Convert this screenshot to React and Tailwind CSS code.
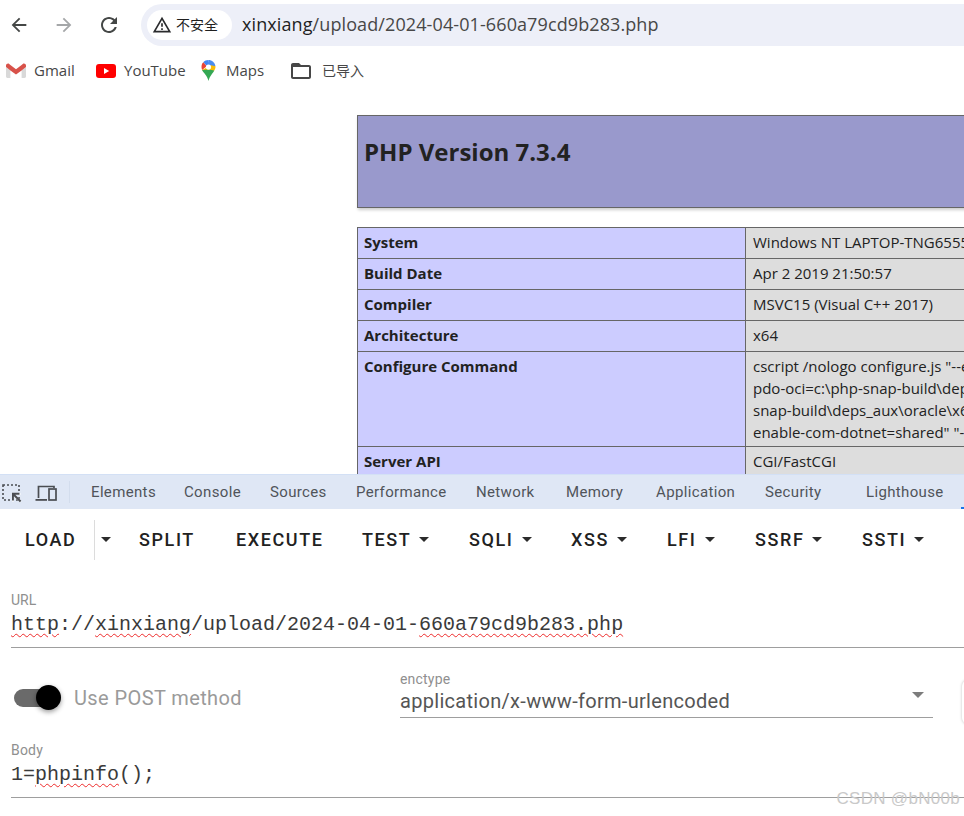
import React from "react";

const roboto = "font-['Roboto',sans-serif]";
const phpFont = "font-['Open_Sans','Noto_Sans',sans-serif]";

const Material = ({ d, className }) => (
  <svg viewBox="0 0 24 24" fill="currentColor" className={className}>
    <path d={d} />
  </svg>
);

const Gmail = () => (
  <svg viewBox="0 0 20 16" className="w-[20px] h-[16px]">
    <path d="M1.3 15H4.5V7.2L0 3.8V13.7C0 14.4.6 15 1.3 15Z" fill="#4285f4" opacity="0" />
    <path d="M1.4 15H4.4V7.4L0 4V13.6C0 14.4.6 15 1.4 15Z" fill="#d9d9d9" />
    <path d="M15.6 15H18.6C19.4 15 20 14.4 20 13.6V4L15.6 7.4Z" fill="#d9d9d9" />
    <path d="M0 2.6V4L4.4 7.4 10 11.6 15.6 7.4 20 4V2.6C20 .9 18 0 16.8 1L15.6 2 10 6.2 4.4 2 3.2 1C2 0 0 .9 0 2.6Z" fill="#d8524a" />
  </svg>
);

const YouTube = () => (
  <svg viewBox="0 0 20 14" className="w-[20px] h-[14px]">
    <rect width="20" height="14" rx="3" fill="#ff0000" />
    <path d="M8 4l5.2 3L8 10z" fill="#fff" />
  </svg>
);

const Maps = () => (
  <svg viewBox="0 0 16 24" className="w-[15px] h-[21px]">
    <path d="M8 0C5.6 0 3.4 1 2 2.7L7 8Z" fill="#4285f4" />
    <path d="M8 0C11.9 0 15.5 3 15.9 7.2L11 8.5 7 5Z" fill="#4a8df0" />
    <path d="M2 2.7C.7 4 0 6 0 8c0 1.3.3 2.4.7 3.4L6 7Z" fill="#ea4335" />
    <path d="M15.9 7C16.1 8.900 15.500 10.500 14.600 12L5 15 .7 11.400 11 6Z" fill="#fbbc04" />
    <path d="M.7 11.400C2.300 15 6.400 17.500 8 24c1.500-6 4.800-8.400 6.600-12L8.400 10.800Z" fill="#34a853" />
    <circle cx="8" cy="8" r="3" fill="#fff" />
  </svg>
);

const InspectIcon = () => (
  <svg viewBox="0 0 20 20" fill="none" className="w-[20px] h-[20px] text-[#4a4d52]">
    <rect x="1" y="2" width="16" height="15" stroke="currentColor" strokeWidth="1.6" strokeDasharray="2 2" />
    <path d="M10 10h8.500v2h-5l6 6-1.500 1.500-6-6v5h-2z" fill="#fff" />
    <path d="M10 9.800h7.500v2h-4.200l6 6-1.400 1.400-6-6v4.200h-1.900z" fill="currentColor" />
  </svg>
);

const DeviceIcon = () => (
  <svg viewBox="0 0 22 18" fill="none" className="w-[22px] h-[18px] text-[#4a4d52]">
    <path d="M3.500 14V2.500H19V4" stroke="currentColor" strokeWidth="1.700" />
    <path d="M.5 15h11.500v1.800H.5z" fill="currentColor" />
    <rect x="14" y="5" width="7" height="11" stroke="currentColor" strokeWidth="1.700" />
  </svg>
);

const Caret = ({ className = "" }) => (
  <span className={`w-0 h-0 border-x-[5px] border-x-transparent border-t-[5px] border-t-[#2b2b2b] ${className}`} />
);

const Squiggle = ({ children }) => (
  <span className="underline decoration-wavy decoration-[#ee2b2b] decoration-1 underline-offset-[3px]">
    {children}
  </span>
);

const rows = [
  ["System", "Windows NT LAPTOP-TNG6555 10.0 build 22631 (Windows 10) AMD64", "h-[31px]"],
  ["Build Date", "Apr 2 2019 21:50:57", "h-[31px]"],
  ["Compiler", "MSVC15 (Visual C++ 2017)", "h-[31px]"],
  ["Architecture", "x64", "h-[31px]"],
  [
    "Configure Command",
    <>
      cscript /nologo configure.js "--enable-snapshot-build" "--enable-debug-pack" "--with-
      <br />
      pdo-oci=c:\php-snap-build\deps_aux\oracle\x64\instantclient_12_1\sdk,shared" "--with-oci8-12c=c:\php-
      <br />
      snap-build\deps_aux\oracle\x64\instantclient_12_1\sdk,shared" "--enable-object-out-dir=../obj/" "--
      <br />
      enable-com-dotnet=shared" "--without-analyzer" "--with-pgo"
    </>,
    "h-[91px]",
  ],
  ["Server API", "CGI/FastCGI", "h-[31px]"],
];

const tabs = [
  ["Elements", "w-[93px]"],
  ["Console", "w-[86px]"],
  ["Sources", "w-[86px]"],
  ["Performance", "w-[120px]"],
  ["Network", "w-[90px]"],
  ["Memory", "w-[90px]"],
  ["Application", "w-[109px]"],
  ["Security", "w-[101px]"],
  ["Lighthouse", "w-[94px]"],
];

const menus = [
  ["SPLIT", false, "w-[97px]"],
  ["EXECUTE", false, "w-[126px]"],
  ["TEST", true, "w-[107px]"],
  ["SQLI", true, "w-[102px]"],
  ["XSS", true, "w-[96px]"],
  ["LFI", true, "w-[88px]"],
  ["SSRF", true, "w-[107px]"],
  ["SSTI", true, "w-[90px]"],
];

export default function App() {
  return (
    <div className={`relative w-[964px] h-[816px] overflow-hidden bg-white ${roboto}`}>
      {/* browser toolbar */}
      <div className="h-[48px] flex items-center pt-[1px]">
        <Material
          d="M20 11H7.830l5.590-5.590L12 4l-8 8 8 8 1.410-1.410L7.830 13H20v-2z"
          className="w-[22px] h-[22px] ml-[8px] text-[#444746]"
        />
        <Material
          d="M12 4l-1.410 1.410L16.170 11H4v2h12.170l-5.580 5.590L12 20l8-8z"
          className="w-[22px] h-[22px] ml-[23px] text-[#a5a7a9]"
        />
        <Material
          d="M17.650 6.350C16.200 4.900 14.210 4 12 4c-4.420 0-7.990 3.580-7.990 8s3.570 8 7.990 8c3.730 0 6.840-2.550 7.730-6h-2.080c-.82 2.330-3.040 4-5.650 4-3.310 0-6-2.690-6-6s2.690-6 6-6c1.660 0 3.140.69 4.220 1.780L13 11h7V4l-2.350 2.350z"
          className="w-[24px] h-[24px] ml-[22px] text-[#444746]"
        />
        <div className="ml-[20px] flex-1 h-[42px] rounded-l-full bg-[#edeff8] flex items-center pl-[6px]">
          <div className="h-[30px] w-[85px] rounded-full bg-white flex items-center pl-[5px] gap-[4px]">
            <Material
              d="M1 21h22L12 2 1 21zm3.470-2L12 5.990 19.530 19H4.470zM11 16h2v2h-2zm0-6h2v4h-2z"
              className="w-[20px] h-[20px] text-[#2a2b2d]"
            />
            <span className="text-[14px] text-[#1f1f1f] font-['Noto_Sans_CJK_SC',sans-serif]">不安全</span>
          </div>
          <span className="ml-[10px] text-[18px] tracking-[0.1px] text-[#1f1f1f] font-['Open_Sans',sans-serif]">
            xinxiang<span className="text-[#474747]">/upload/2024-04-01-660a79cd9b283.php</span>
          </span>
        </div>
      </div>

      {/* bookmarks */}
      <div className="h-[46px] flex items-center pb-[1px] text-[15px] text-[#474747] font-['Open_Sans',sans-serif]">
        <div className="ml-[6px] flex items-center gap-[8px]">
          <Gmail />
          <span className="w-[52px]">Gmail</span>
        </div>
        <div className="ml-[10px] flex items-center gap-[8px]">
          <YouTube />
          <span className="w-[66px]">YouTube</span>
        </div>
        <div className="ml-[11px] flex items-center gap-[10px]">
          <Maps />
          <span className="w-[53px]">Maps</span>
        </div>
        <div className="ml-[10px] flex items-center gap-[9px]">
          <Material
            d="M20 6h-8l-2-2H4c-1.100 0-2 .9-2 2v12c0 1.100.9 2 2 2h16c1.100 0 2-.9 2-2V8c0-1.100-.9-2-2-2zm0 12H4V8h16v10z"
            className="w-[24px] h-[24px] text-[#474747]"
          />
          <span className="text-[14px] font-['Noto_Sans_CJK_SC',sans-serif]">已导入</span>
        </div>
      </div>

      {/* phpinfo page */}
      <div className={`h-[380px] overflow-hidden pt-[21px] pl-[357px] ${phpFont} text-[15px] text-[#222]`}>
        <div className="w-[800px] h-[93px] bg-[#9999cc] border border-[#666] shadow-[1px_2px_3px_#ccc] pl-[6px] pt-[17px]">
          <h1 className="text-[24px] leading-[38px] font-bold">PHP Version 7.3.4</h1>
        </div>
        <table className="mt-[19px] w-[800px] table-fixed border-collapse">
          <tbody>
            {rows.map(([name, value, height]) => (
              <tr key={name} className={height}>
                <td className="w-[388px] border border-[#666] bg-[#ccccff] px-[6px] py-[3px] align-top font-bold leading-[22px] whitespace-nowrap">
                  {name}
                </td>
                <td className="border border-[#666] bg-[#dddddd] px-[7px] py-[3px] align-top leading-[22px] whitespace-nowrap">
                  {value}
                </td>
              </tr>
            ))}
          </tbody>
        </table>
      </div>

      {/* devtools tabs */}
      <div className="relative h-[35px] bg-[#dfe7f5] border-t border-[#d3e0f5] flex items-center text-[15px] tracking-[0.35px] text-[#50545a]">
        <div className="ml-[2px] mt-[1px] flex items-center gap-[13px]">
          <InspectIcon />
          <DeviceIcon />
        </div>
        <div className="ml-[12px] mr-[21px] w-px h-[22px] bg-[#d3dded]" />
        {tabs.map(([tab, width]) => (
          <span key={tab} className={`${width} shrink-0`}>
            {tab}
          </span>
        ))}
        <span className="absolute right-0 bottom-0 w-[3px] h-[2px] bg-[#1a73e8]" />
      </div>

      {/* hackbar buttons */}
      <div className="h-[61px] flex items-center text-[18px] font-medium tracking-[1.6px] text-[#212121]">
        <span className="ml-[25px] w-[69px] leading-[40px]">LOAD</span>
        <div className="w-px h-[40px] bg-[#dcdcdc]" />
        <Caret className="ml-[6px]" />
        <div className="ml-[28px] flex items-center">
          {menus.map(([label, hasMenu, width]) => (
            <div key={label} className={`${width} shrink-0 flex items-center gap-[8px]`}>
              <span>{label}</span>
              {hasMenu && <Caret />}
            </div>
          ))}
        </div>
      </div>

      {/* form */}
      <div className="pl-[11px]">
        <div className="mt-[21px] text-[14px] leading-[18px] text-[#8f8f8f]">URL</div>
        <div className="h-[39px] border-b border-[#9e9e9e] pt-[3px] font-['Liberation_Mono',monospace] text-[20px] leading-[26px] text-[#3a3a3a] whitespace-nowrap">
          <Squiggle>http</Squiggle>://<Squiggle>xinxiang</Squiggle>/upload/2024-04-01-
          <Squiggle>660a79cd9b283.php</Squiggle>
        </div>

        <div className="mt-[21px] h-[49px] flex items-start">
          <div className="relative mt-[20px] ml-[3px] w-[44px] h-[18px] rounded-full bg-[#6a6a6a]">
            <span className="absolute right-[-3px] top-[-4px] w-[25px] h-[25px] rounded-full bg-black shadow-[0_2px_5px_rgba(0,0,0,0.4)]" />
          </div>
          <span className="ml-[16px] mt-[17px] w-[326px] text-[20px] tracking-[0.4px] leading-[24px] text-[#9a9a9a]">
            Use POST method
          </span>
          <div className="w-[533px] h-[49px] border-b border-[#9e9e9e] relative">
            <div className="text-[14px] leading-[18px] mt-[1px] tracking-[0.2px] text-[#8f8f8f]">enctype</div>
            <div className="text-[20px] leading-[26px] tracking-[0.3px] text-[#555]">application/x-www-form-urlencoded</div>
            <span className="absolute right-[9px] top-[23px] w-0 h-0 border-x-[6px] border-x-transparent border-t-[6px] border-t-[#7c7c7c]" />
          </div>
        </div>

        <div className="mt-[23px] text-[14px] leading-[18px] tracking-[0.2px] text-[#8f8f8f]">Body</div>
        <div className="h-[39px] border-b border-[#9e9e9e] pt-[3px] font-['Liberation_Mono',monospace] text-[20px] leading-[26px] text-[#3a3a3a]">
          1=<Squiggle>phpinfo</Squiggle>();
        </div>
      </div>

      {/* edge of a floating card, cut off by the window */}
      <div className="absolute left-[962px] top-[680px] w-[20px] h-[44px] rounded-l-[6px] bg-white shadow-[0_0_3px_rgba(0,0,0,0.25)]" />

      {/* watermark */}
      <div className="absolute right-[4px] top-[789px] font-['Liberation_Sans',sans-serif] text-[17px] leading-[20px] tracking-[0.3px] text-[#c9c9c9]">
        CSDN @bN00b
      </div>
    </div>
  );
}
